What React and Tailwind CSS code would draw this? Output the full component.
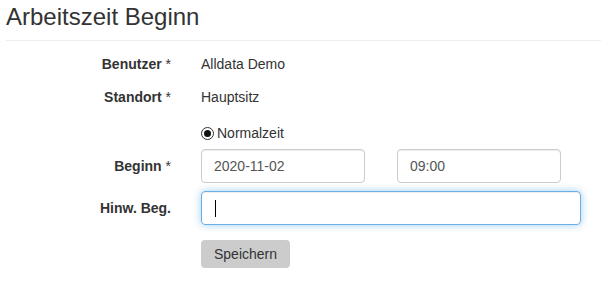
export default function App() {
  const font = { fontFamily: '"Liberation Sans", Arial, sans-serif' };
  return (
    <div className="w-[601px] h-[288px] bg-white text-[#333] text-[14px] overflow-hidden" style={font}>
      <h3 className="text-[24px] leading-[26px] pl-[6px] pt-[4px] m-0 font-normal">Arbeitszeit Beginn</h3>
      <div className="ml-[6px] mt-[10px] h-px bg-[#eee]" />
      <div className="flex flex-col">
        <div className="flex items-center h-[33px] mt-[7px]">
          <div className="w-[171px] text-right font-bold">Benutzer <span className="font-normal">*</span></div>
          <div className="ml-[30px]">Alldata Demo</div>
        </div>
        <div className="flex items-center h-[33px]">
          <div className="w-[171px] text-right font-bold">Standort <span className="font-normal">*</span></div>
          <div className="ml-[30px]">Hauptsitz</div>
        </div>
        <div className="flex items-center h-[24px] mt-[7px]">
          <div className="w-[171px]" />
          <div className="ml-[30px] flex items-center">
            <span className="w-[13px] h-[13px] rounded-full border border-[#333] flex items-center justify-center">
              <span className="w-[7px] h-[7px] rounded-full bg-[#111]" />
            </span>
            <span className="ml-[3px]">Normalzeit</span>
          </div>
        </div>
        <div className="flex items-center h-[34px] mt-[4px]">
          <div className="w-[171px] text-right font-bold">Beginn <span className="font-normal">*</span></div>
          <div className="ml-[30px] flex gap-[32px]">
            <div className="w-[164px] h-[34px] border border-[#ccc] rounded-[4px] px-[12px] flex items-center text-[#555] shadow-[inset_0_1px_1px_rgba(0,0,0,0.075)]">2020-11-02</div>
            <div className="w-[164px] h-[34px] border border-[#ccc] rounded-[4px] px-[12px] flex items-center text-[#555] shadow-[inset_0_1px_1px_rgba(0,0,0,0.075)]">09:00</div>
          </div>
        </div>
        <div className="flex items-center h-[34px] mt-[8px]">
          <div className="w-[171px] text-right font-bold">Hinw. Beg.</div>
          <div className="ml-[30px] w-[380px] h-[34px] border border-[#66afe9] rounded-[4px] px-[12px] flex items-center shadow-[inset_0_1px_1px_rgba(0,0,0,0.075),0_0_8px_rgba(102,175,233,0.6)]">
            <span className="w-px h-[17px] bg-black ml-[1px]" />
          </div>
        </div>
        <div className="flex items-center mt-[15px]">
          <div className="w-[171px]" />
          <div className="ml-[30px] w-[89px] h-[28px] bg-[#ccc] rounded-[4px] flex items-center justify-center text-[#333]">Speichern</div>
        </div>
      </div>
    </div>
  );
}
